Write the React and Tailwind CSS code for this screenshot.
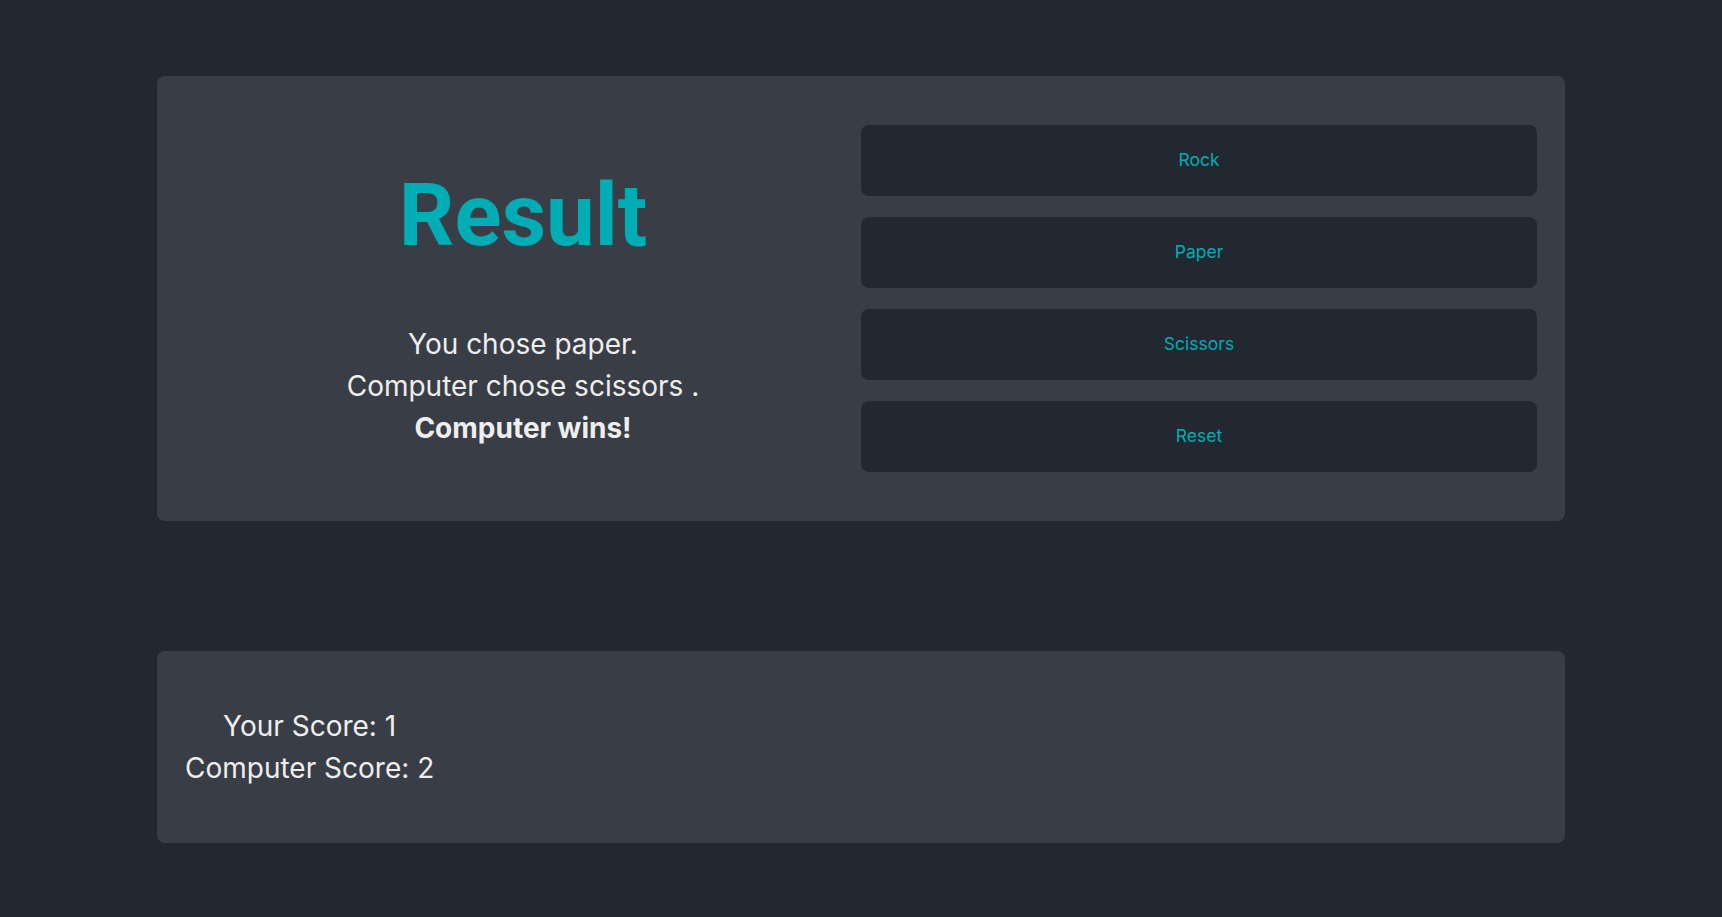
import React, { useState } from "react";

const choices = ["Rock", "Paper", "Scissors"];

export default function App() {
  const [player, setPlayer] = useState("paper");
  const [computer, setComputer] = useState("scissors");
  const [outcome, setOutcome] = useState("Computer wins!");
  const [score, setScore] = useState({ you: 1, computer: 2 });

  const play = (choice) => {
    const mine = choice.toLowerCase();
    const theirs = choices[Math.floor(Math.random() * 3)].toLowerCase();
    const beats = { rock: "scissors", paper: "rock", scissors: "paper" };
    setPlayer(mine);
    setComputer(theirs);
    if (mine === theirs) {
      setOutcome("It's a tie!");
    } else if (beats[mine] === theirs) {
      setOutcome("You win!");
      setScore((s) => ({ ...s, you: s.you + 1 }));
    } else {
      setOutcome("Computer wins!");
      setScore((s) => ({ ...s, computer: s.computer + 1 }));
    }
  };

  const reset = () => {
    setScore({ you: 0, computer: 0 });
  };

  return (
    <div className="min-h-screen bg-[#222831] pt-[76px] pb-[75px] font-['Inter',sans-serif] text-[#eeeeee]">
      <div className="mx-[157px] flex rounded-[8px] bg-[#393e46] px-[28px] py-[49px]">
        <div className="flex w-1/2 flex-col items-center pt-[39px]">
          <h1 className="font-['Roboto',sans-serif] text-[87px] font-bold leading-[102px] text-[#00adb5]">
            Result
          </h1>
          <div className="mt-[57px] text-center text-[28px] leading-[42px]">
            <p>You chose {player}.</p>
            <p>Computer chose {computer} .</p>
            <p className="font-bold">{outcome}</p>
          </div>
        </div>
        <div className="flex w-1/2 flex-col gap-[21px]">
          {choices.map((c) => (
            <button
              key={c}
              onClick={() => play(c)}
              className="h-[71px] rounded-[8px] bg-[#222831] text-[17.5px] text-[#00adb5]"
            >
              {c}
            </button>
          ))}
          <button
            onClick={reset}
            className="h-[71px] rounded-[8px] bg-[#222831] text-[17.5px] text-[#00adb5]"
          >
            Reset
          </button>
        </div>
      </div>

      <div className="mx-[157px] mt-[130px] flex h-[192px] items-center rounded-[8px] bg-[#393e46] px-[28px]">
        <div className="text-center text-[28px] leading-[42px]">
          <p>Your Score: {score.you}</p>
          <p>Computer Score: {score.computer}</p>
        </div>
      </div>
    </div>
  );
}
